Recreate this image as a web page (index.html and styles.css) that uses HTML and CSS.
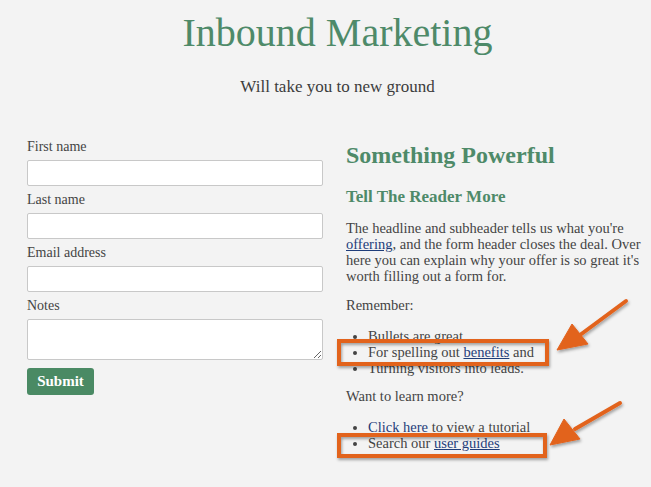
FILE: index.html
```html
<!DOCTYPE html>
<html>
<head>
<meta charset="utf-8">
<link rel="stylesheet" href="styles.css">
</head>
<body>
<div class="page">
  <header class="hero">
    <h1 class="title">Inbound Marketing</h1>
    <p class="subtitle">Will take you to new ground</p>
  </header>
  <main class="cols">
    <form class="form">
      <label class="lbl">First name</label>
      <input class="field" type="text">
      <label class="lbl">Last name</label>
      <input class="field" type="text">
      <label class="lbl">Email address</label>
      <input class="field" type="text">
      <label class="lbl">Notes</label>
      <textarea class="field area"></textarea>
      <button class="submit" type="button">Submit</button>
    </form>
    <section class="copy">
      <h2 class="h2">Something Powerful</h2>
      <h3 class="h3">Tell The Reader More</h3>
      <p class="para">The headline and subheader tells us what you're <a href="#">offering</a>, and the form header closes the deal. Over here you can explain why your offer is so great it's worth filling out a form for.</p>
      <p class="para">Remember:</p>
      <ul class="list">
        <li>Bullets are great</li>
        <li>For spelling out <a href="#">benefits</a> and</li>
        <li>Turning visitors into leads.</li>
      </ul>
      <p class="para after">Want to learn more?</p>
      <ul class="list last">
        <li><a href="#">Click here</a> to view a tutorial</li>
        <li>Search our <a href="#">user guides</a></li>
      </ul>
    </section>
  </main>
  <svg class="marks" width="651" height="487" viewBox="0 0 651 487">
    <defs>
      <filter id="sh" x="-10%" y="-30%" width="130%" height="180%">
        <feDropShadow dx="1" dy="2" stdDeviation="1.5" flood-color="#000" flood-opacity="0.35"/>
      </filter>
    </defs>
    <g filter="url(#sh)" fill="none" stroke="#e2631d" stroke-width="4">
      <rect x="339" y="341" width="208" height="23"/>
      <rect x="339" y="435" width="206" height="21"/>
    </g>
    <g filter="url(#sh)" fill="#e2631d" stroke="#e2631d">
      <line x1="626" y1="301" x2="580" y2="335" stroke-width="4" stroke-linecap="round"/>
      <polygon points="557,350 572,324 588,344"/>
      <line x1="620" y1="403" x2="575" y2="429" stroke-width="4" stroke-linecap="round"/>
      <polygon points="550,445 564,419 580,439"/>
    </g>
  </svg>
</div>
</body>
</html>
```
FILE: styles.css
```css
* { box-sizing: border-box; }
html, body { margin: 0; background: #f3f3f3; }
body {
  font-family: "Liberation Serif", "DejaVu Serif", serif;
  color: #444;
  font-size: 14.5px;
  line-height: 16px;
}
.page { position: relative; width: 651px; height: 487px; overflow: hidden; }
.hero { text-align: center; padding: 11px 0 0 24px; }
.title {
  margin: 0;
  font-weight: normal;
  color: #4e8a69;
  font-size: 40px;
  line-height: 44px;
}
.subtitle { margin: 22px 0 0; font-size: 17px; line-height: 20px; color: #3c3c3c; }
.cols {
  display: grid;
  grid-template-columns: 296px 1fr;
  column-gap: 23px;
  padding: 42px 2px 0 27px;
}
.form { display: flex; flex-direction: column; align-items: flex-start; }
.lbl { font-size: 14px; line-height: 16px; margin-bottom: 5px; color: #444; }
.field {
  width: 296px;
  height: 26px;
  border: 1px solid #c8c8c8;
  border-radius: 2px;
  background: #fff;
  margin: 0 0 6px;
  padding: 0;
}
.area { height: 41px; resize: vertical; margin-bottom: 8px; }
.submit {
  background: #4a8a64;
  color: #fff;
  border: none;
  border-radius: 3px;
  font-family: inherit;
  font-size: 15px;
  font-weight: bold;
  height: 27px;
  width: 67px;
  padding: 0;
}
.copy { padding-top: 2px; }
.h2 { margin: 0; color: #4e8a69; font-size: 24px; line-height: 28px; font-weight: bold; }
.h3 { margin: 18px 0 0; color: #4e8a69; font-size: 17px; line-height: 20px; font-weight: bold; }
.para { margin: 13px 0 0; }
.para.after { margin-top: 12px; }
.list { margin: 15px 0 0; padding-left: 22px; }
.list li { line-height: 16px; }
a { color: #1f3d7a; text-decoration: underline; }
.marks { position: absolute; left: 0; top: 0; pointer-events: none; }
```
